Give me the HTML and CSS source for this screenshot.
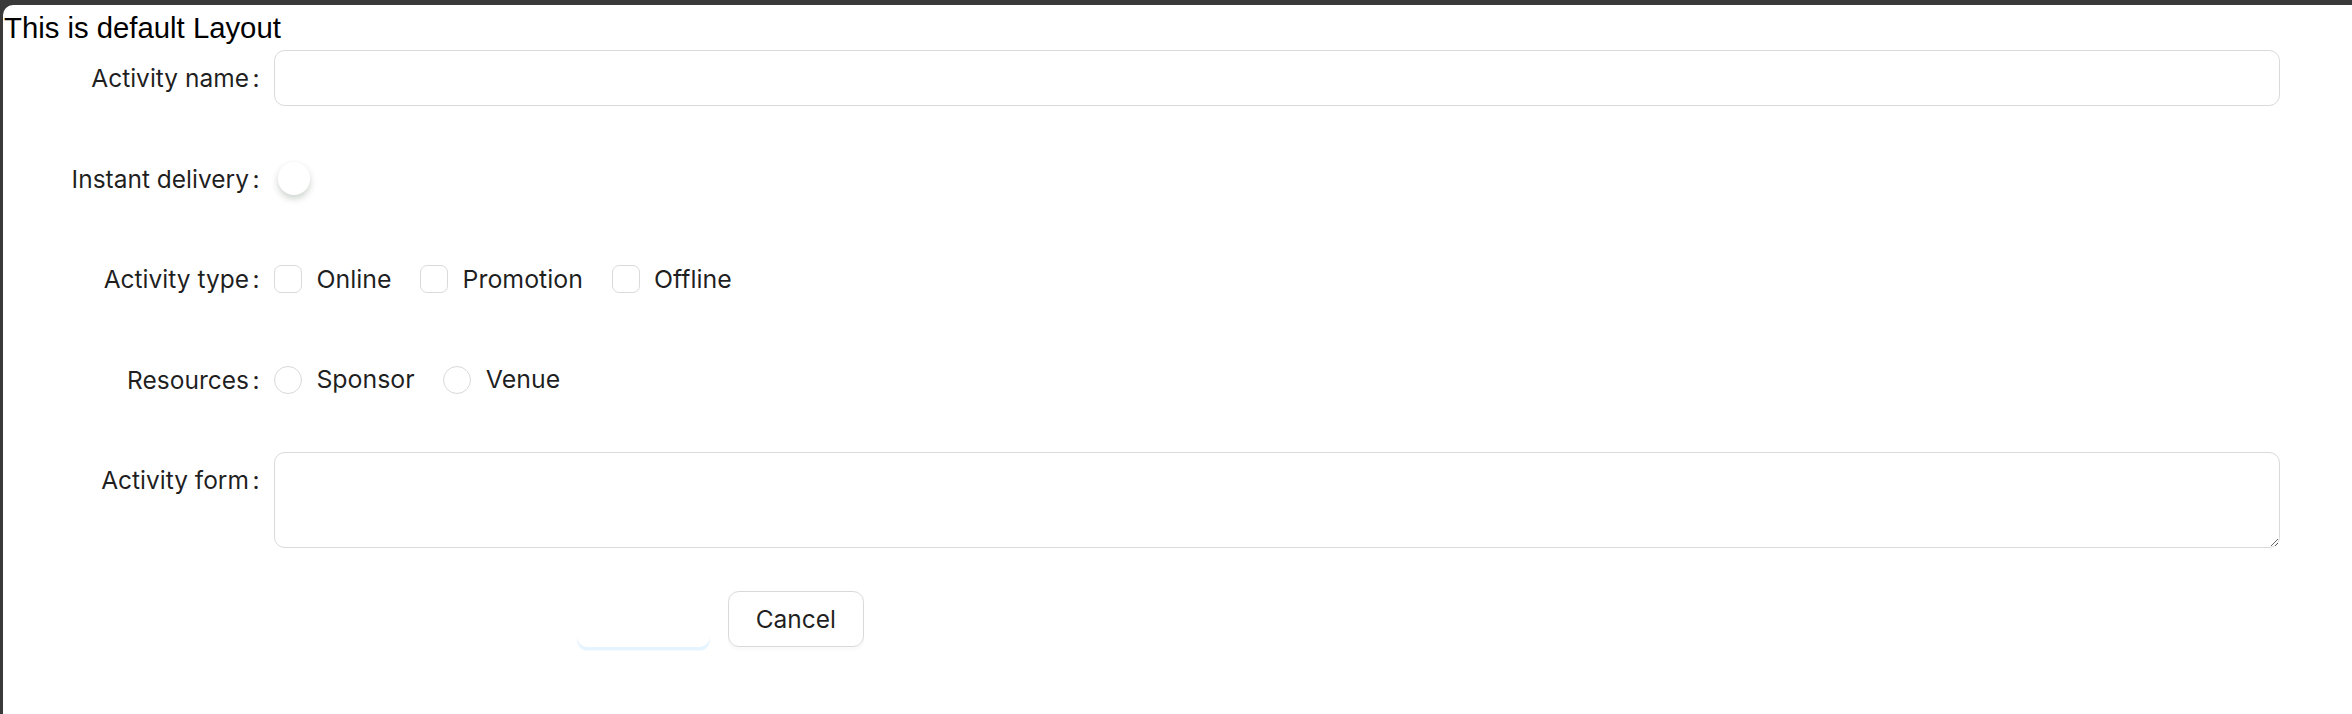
FILE: index.html
```html
<!DOCTYPE html>
<html lang="en">
<head>
<meta charset="utf-8">
<title>Default Layout</title>
<link rel="stylesheet" href="styles.css">
</head>
<body>
<div class="window">
  <div class="title">This is default Layout</div>
  <form class="form">
    <div class="row">
      <label class="label">Activity name</label>
      <div class="control"><input class="input" type="text"></div>
    </div>
    <div class="row">
      <label class="label">Instant delivery</label>
      <div class="control">
        <span class="switch"><span class="switch-handle"></span></span>
      </div>
    </div>
    <div class="row">
      <label class="label">Activity type</label>
      <div class="control">
        <div class="group">
          <span class="option"><span class="checkbox"></span><span class="option-text">Online</span></span>
          <span class="option"><span class="checkbox"></span><span class="option-text">Promotion</span></span>
          <span class="option"><span class="checkbox"></span><span class="option-text">Offline</span></span>
        </div>
      </div>
    </div>
    <div class="row">
      <label class="label">Resources</label>
      <div class="control">
        <div class="group">
          <span class="option"><span class="radio"></span><span class="option-text">Sponsor</span></span>
          <span class="option"><span class="radio"></span><span class="option-text">Venue</span></span>
        </div>
      </div>
    </div>
    <div class="row">
      <label class="label">Activity form</label>
      <div class="control"><textarea class="textarea"></textarea></div>
    </div>
    <div class="actions">
      <button type="button" class="btn btn-primary">Submit</button>
      <button type="button" class="btn btn-default">Cancel</button>
    </div>
  </form>
</div>
</body>
</html>
```
FILE: styles.css
```css
html, body {
  margin: 0;
  padding: 0;
  height: 100%;
}

body {
  background: #3a3a3a;
  font-family: Inter, "Noto Sans", sans-serif;
  overflow: hidden;
}

.window {
  margin: 5px 0 0 3px;
  height: 709px;
  background: #ffffff;
  border-top-left-radius: 10px;
  overflow: hidden;
}

.title {
  font-family: "Liberation Sans", Arial, sans-serif;
  font-size: 29.3px;
  line-height: 33px;
  color: #000000;
  padding: 6px 0 0 1px;
}

.form {
  margin: 6px 0 0 0;
  display: flex;
  flex-direction: column;
  gap: 44.6px;
}

.row {
  display: flex;
  align-items: flex-start;
}

.label {
  flex: none;
  width: 271px;
  height: 56px;
  line-height: 57px;
  text-align: right;
  font-size: 24.5px;
  color: rgba(0, 0, 0, 0.88);
  white-space: nowrap;
}

.label::after {
  content: ":";
  margin: 0 14.4px 0 3.6px;
}

.control {
  flex: none;
  width: 2006px;
  min-height: 56px;
  display: flex;
  align-items: center;
}

.input {
  display: block;
  width: 100%;
  height: 56px;
  box-sizing: border-box;
  margin: 0;
  padding: 0 19.8px;
  border: 1px solid #d9d9d9;
  border-radius: 10.8px;
  background: #ffffff;
  font: inherit;
  font-size: 24.5px;
  outline: none;
}

.textarea {
  display: block;
  width: 100%;
  height: 96px;
  box-sizing: border-box;
  margin: 0;
  padding: 7px 19.8px;
  border: 1px solid #d9d9d9;
  border-radius: 10.8px;
  background: #ffffff;
  font: inherit;
  font-size: 24.5px;
  outline: none;
  resize: vertical;
}

.switch {
  position: relative;
  display: inline-block;
  width: 79.2px;
  height: 39.6px;
  border-radius: 19.8px;
  background: transparent;
}

.switch-handle {
  position: absolute;
  left: 3.6px;
  top: 3.6px;
  width: 32.4px;
  height: 32.4px;
  border-radius: 50%;
  background: #ffffff;
  box-shadow: 0 3.6px 7.2px 0 rgba(0, 35, 11, 0.2);
}

.group {
  display: flex;
  align-items: center;
}

.option {
  display: inline-flex;
  align-items: center;
  margin-right: 14.4px;
  font-size: 24.9px;
  color: rgba(0, 0, 0, 0.88);
}

.checkbox,
.radio {
  flex: none;
  width: 28px;
  height: 28px;
  box-sizing: border-box;
  border: 1px solid #d9d9d9;
  background: #ffffff;
}

.checkbox {
  border-radius: 7.2px;
}

.radio {
  border-radius: 50%;
}

.option-text {
  padding: 1px 14.4px 0;
  line-height: 39.6px;
}

.actions {
  display: flex;
  gap: 18px;
  margin-top: -2px;
  padding-left: 574px;
}

.btn {
  height: 56px;
  box-sizing: border-box;
  margin: 0;
  padding: 0 27px;
  border: 1px solid transparent;
  border-radius: 10.8px;
  font-family: Inter, "Noto Sans", sans-serif;
  font-size: 24.5px;
  line-height: 1;
  cursor: pointer;
}

.btn-primary {
  padding: 0 25px;
  background: transparent;
  color: #ffffff;
  box-shadow: 0 3.6px 0 rgba(5, 145, 255, 0.1);
}

.btn-default {
  background: #ffffff;
  border-color: #d9d9d9;
  color: rgba(0, 0, 0, 0.88);
  box-shadow: 0 3.6px 0 rgba(0, 0, 0, 0.02);
}
```
